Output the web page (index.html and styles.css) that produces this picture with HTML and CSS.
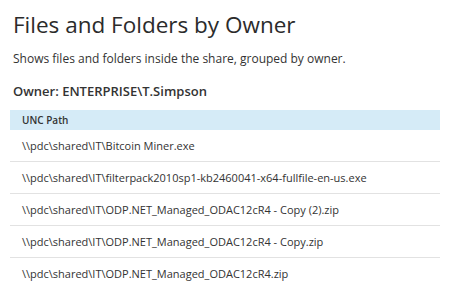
FILE: index.html
```html
<!DOCTYPE html>
<html lang="en">
<head>
    <meta charset="UTF-8">
    <title>Files and Folders by Owner</title>
    <link rel="stylesheet" href="styles.css">
</head>
<body>
    <div class="report">
        <h1 class="report-title">Files and Folders by Owner</h1>
        <p class="report-desc">Shows files and folders inside the share, grouped by owner.</p>

        <!-- Owner group -->
        <h2 class="owner">Owner: ENTERPRISE\T.Simpson</h2>
        <table class="paths">
            <thead>
                <tr>
                    <th>UNC Path</th>
                </tr>
            </thead>
            <tbody>
                <tr><td>\\pdc\shared\IT\Bitcoin Miner.exe</td></tr>
                <tr><td>\\pdc\shared\IT\filterpack2010sp1-kb2460041-x64-fullfile-en-us.exe</td></tr>
                <tr><td>\\pdc\shared\IT\ODP.NET_Managed_ODAC12cR4 - Copy (2).zip</td></tr>
                <tr><td>\\pdc\shared\IT\ODP.NET_Managed_ODAC12cR4 - Copy.zip</td></tr>
                <tr><td>\\pdc\shared\IT\ODP.NET_Managed_ODAC12cR4.zip</td></tr>
            </tbody>
        </table>
    </div>
</body>
</html>
```

FILE: styles.css
```css
body {
    margin: 0;
    background-color: #fff;
    color: #333;
    font-family: "Open Sans", Arial, sans-serif;
}

.report {
    padding: 10px 10px 0 10px;
}

.report-title {
    margin: 0 0 10px 3px;
    font-size: 22.5px;
    line-height: 30px;
    font-weight: 400;
    color: #2b2b2b;
}

.report-desc {
    margin: 0 0 13px 3px;
    font-size: 12px;
    line-height: 18px;
}

.owner {
    margin: 0 0 9px 3px;
    font-size: 13px;
    line-height: 20px;
    font-weight: 600;
    color: #333;
}

.paths {
    width: 430px;
    border-collapse: collapse;
}

.paths th {
    height: 20px;
    padding: 0 12px;
    background-color: #d5ebf7;
    font-size: 10px;
    line-height: 20px;
    font-weight: 600;
    text-align: left;
}

.paths td {
    height: 31px;
    padding: 0 12px;
    font-size: 11px;
    line-height: 31px;
    border-bottom: 1px solid #e2e2e2;
}

.paths tr:last-child td {
    border-bottom: none;
}
```
